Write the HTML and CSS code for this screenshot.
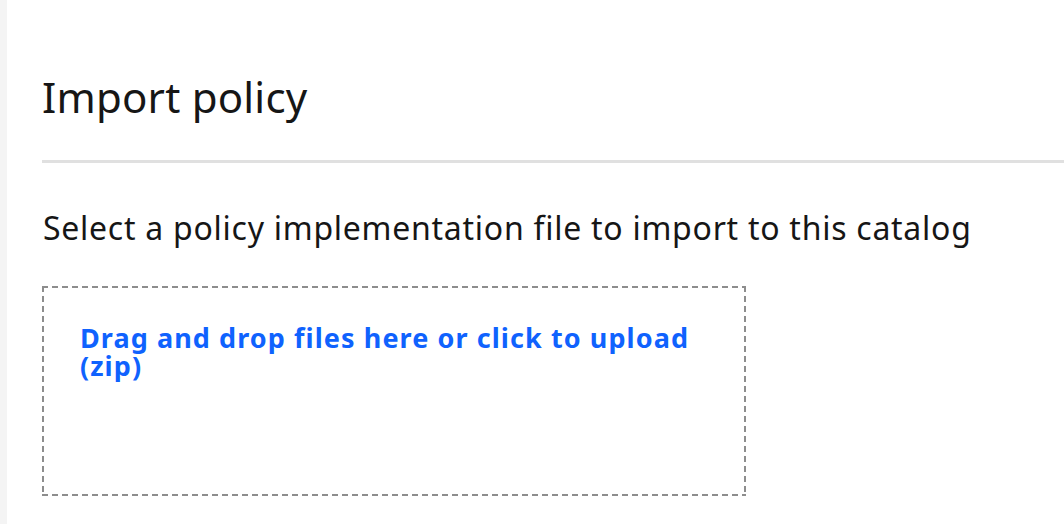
FILE: index.html
```html
<!DOCTYPE html>
<html lang="en">
<head>
<meta charset="utf-8">
<title>Import policy</title>
<link rel="stylesheet" href="styles.css">
</head>
<body>
<div class="page">
  <aside class="rail"></aside>
  <main class="content">
    <header class="header">
      <h1 class="title">Import policy</h1>
    </header>
    <p class="desc">Select a policy implementation file to import to this catalog</p>
    <div class="dropzone" role="button" tabindex="0">
      <span class="drop-text">Drag and drop files here or click to upload (zip)</span>
    </div>
  </main>
</div>
</body>
</html>
```

FILE: styles.css
```css
html, body {
  margin: 0;
  padding: 0;
  background: #ffffff;
}

body {
  font-family: "Noto Sans", "Liberation Sans", Arial, sans-serif;
  color: #161616;
}

.page {
  display: flex;
  min-height: 524px;
  overflow: hidden;
}

.rail {
  flex: 0 0 7px;
  background: #f4f4f4;
}

.content {
  flex: 1 1 auto;
  padding-left: 35px;
}

.header {
  padding-top: 72px;
  padding-bottom: 38px;
  border-bottom: 3px solid #e0e0e0;
}

.title {
  margin: 0;
  font-size: 42px;
  line-height: 50px;
  font-weight: 400;
  letter-spacing: 0.005em;
}

.desc {
  margin: 45px 0 38px 1px;
  font-size: 32px;
  line-height: 40px;
  font-weight: 400;
  letter-spacing: 0.023em;
}

.dropzone {
  box-sizing: border-box;
  width: 704px;
  height: 210px;
  padding: 38px 36px 0 38px;
  background:
    repeating-linear-gradient(90deg, #8d8d8d 0 6px, transparent 6px 10px) left top / 100% 2px no-repeat,
    repeating-linear-gradient(90deg, #8d8d8d 0 6px, transparent 6px 10px) left bottom / 100% 2px no-repeat,
    repeating-linear-gradient(180deg, #8d8d8d 0 6px, transparent 6px 10px) left top / 2px 100% no-repeat,
    repeating-linear-gradient(180deg, #8d8d8d 0 6px, transparent 6px 10px) right top / 2px 100% no-repeat;
  cursor: pointer;
}

.drop-text {
  display: block;
  font-size: 27px;
  line-height: 28px;
  font-weight: 700;
  color: #0f62fe;
  letter-spacing: 0.04em;
}
```
